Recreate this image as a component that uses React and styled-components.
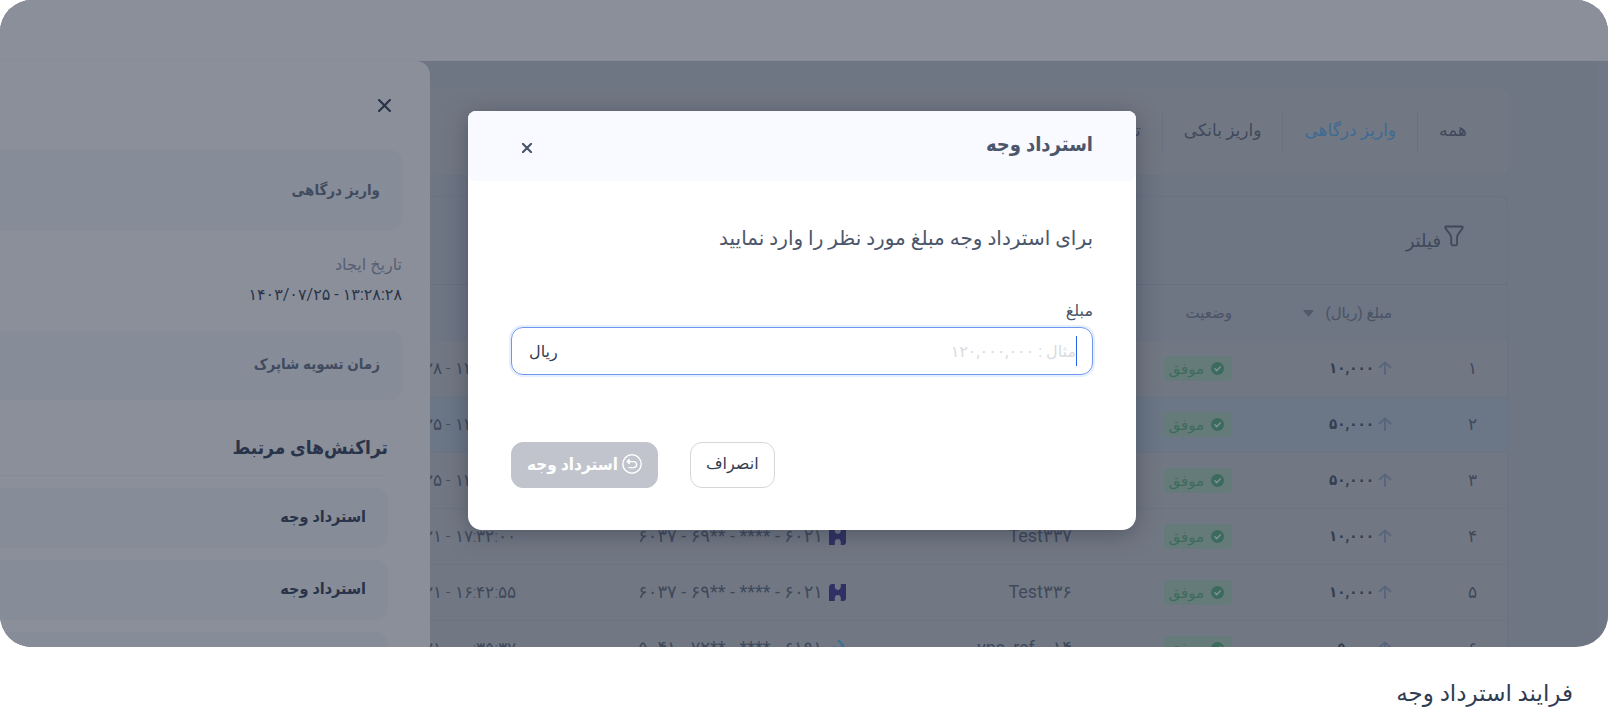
import React from "react";
import styled, { createGlobalStyle, css } from "styled-components";

const GlobalStyle = createGlobalStyle`
  *, *::before, *::after { box-sizing: border-box; }
  body { margin: 0; background: #fff; }
  body, button, input, table {
    font-family: Roboto, "DejaVu Sans", "Liberation Sans", sans-serif;
  }
  h1, h2, h3, p { margin: 0; }
`;

const strong = css`
  font-family: Roboto, "DejaVu Sans Condensed", "DejaVu Sans", sans-serif;
  font-weight: 700;
`;

const Figure = styled.figure`
  margin: 0;
  overflow: hidden;
`;

const Screen = styled.div`
  position: relative;
  height: 647px;
  overflow: hidden;
  border-radius: 32px;
  background: #6e7583;
  color: #3c475b;
`;

const TopBar = styled.header`
  height: 61px;
  background: #8b8f99;
  border-bottom: 1px solid #868c98;
`;

const Body = styled.div`
  display: flex;
`;

const ScrollTrack = styled.div`
  flex: 0 0 9px;
  height: 586px;
  background: #717885;
`;

const Main = styled.main`
  flex: 1;
  min-width: 0;
  display: flex;
  flex-direction: column;
  gap: 21px;
  padding: 27px 91px 0 100px;
`;

const Tabs = styled.nav`
  display: flex;
  align-items: center;
  height: 87px;
  padding: 0 20px;
  border-radius: 8px;
  background: #727883;
`;

const Tab = styled.a`
  padding: 0 21px 4px;
  line-height: 38px;
  font-size: 17px;
  white-space: nowrap;
  text-decoration: none;
  color: ${(p) => (p.$active ? "#3d6a93" : "#3f495b")};
  & + & { border-right: 1px solid #697080; }
`;

const Card = styled.section`
  border: 1px solid #6a7281;
  border-bottom: 0;
  border-radius: 8px 8px 0 0;
`;

const Toolbar = styled.div`
  display: flex;
  align-items: center;
  height: 88px;
  padding: 0 43px;
  border-bottom: 1px solid #687080;
`;

const FilterButton = styled.button`
  display: flex;
  align-items: flex-start;
  gap: 3px;
  padding: 0;
  border: 0;
  background: none;
  color: #3f495b;
  font-size: 18px;
  line-height: 32px;
`;

const Table = styled.table`
  width: 100%;
  table-layout: fixed;
  border-collapse: separate;
  border-spacing: 0;
  font-size: 17px;
  line-height: 24px;
`;

const Col = styled.col`
  width: ${(p) => p.$w};
`;

const Th = styled.th`
  height: 56px;
  padding: 0 15px;
  text-align: right;
  font-weight: 400;
  font-size: 15px;
  white-space: nowrap;
  color: #495366;
`;

const Row = styled.tr`
  background: ${(p) => (p.$selected ? "#6b7686" : "#727883")};
`;

const Td = styled.td`
  height: 56px;
  padding: 0 ${(p) => (p.$index ? "30px" : "15px")} 1px 0;
  border-bottom: 1px solid #6d7481;
  text-align: right;
  white-space: nowrap;
  font-size: ${(p) => (p.$large ? "18px" : "17px")};
  font-weight: ${(p) => (p.$light ? 300 : 400)};
  color: #3f495b;
`;

const Inline = styled.span`
  display: flex;
  align-items: center;
  gap: ${(p) => p.$gap};
`;

const Amount = styled.span`
  ${strong}
  font-size: 15px;
  color: #333e53;
`;

const Ltr = styled.bdi`
  unicode-bidi: isolate;
  direction: ltr;
`;

const Badge = styled.span`
  display: inline-flex;
  align-items: center;
  gap: 7px;
  height: 25px;
  padding: 0 8px 0 5px;
  border-radius: 4px;
  background: #657b7a;
  color: #3e6b5a;
  font-size: 15px;
  line-height: 24px;
  vertical-align: middle;
`;

const Drawer = styled.aside`
  position: absolute;
  top: 61px;
  bottom: 0;
  left: 0;
  width: 430px;
  overflow: hidden;
  padding: 34px 28px 0 0;
  border-radius: 0 14px 0 0;
  background: #8b8f99;
  color: #29344a;
`;

const CloseButton = styled.button`
  display: grid;
  place-items: center;
  padding: 0;
  border: 0;
  background: none;
  color: inherit;
  width: 20px;
  height: 20px;
`;

const DrawerTop = styled.div`
  padding-right: 8px;
  height: 55px;
`;

const Panel = styled.div`
  display: flex;
  align-items: center;
  height: ${(p) => p.$h};
  padding: 0 22px 2px;
  border-radius: 0 12px 12px 0;
  background: #868d98;
  color: ${(p) => (p.$dark ? "#29344a" : "#414b60")};
  ${strong}
  font-size: ${(p) => (p.$dark ? "16px" : "15px")};
  line-height: 24px;
`;

const Field = styled.dl`
  margin: 0;
  padding: 19px 0 20px;
  line-height: 30px;
  font-size: 16px;
`;

const FieldName = styled.dt`
  color: #566074;
`;

const FieldValue = styled.dd`
  margin: 0;
`;

const Related = styled.section`
  display: flex;
  flex-direction: column;
  gap: 12px;
  padding: 29px 14px 0 0;
`;

const RelatedTitle = styled.h3`
  ${strong}
  height: 47px;
  border-bottom: 1px solid #858b97;
  font-size: 19px;
  line-height: 38px;
`;

const ModalLayer = styled.div`
  position: absolute;
  inset: 111px 4px auto 0;
  display: flex;
  justify-content: center;
`;

const Modal = styled.section`
  width: 668px;
  overflow: hidden;
  border-radius: 8px 8px 14px 14px;
  background: #fff;
  color: #4b566b;
  box-shadow: 0 4px 24px rgba(30, 38, 56, 0.4);
`;

const ModalHeader = styled.header`
  display: flex;
  justify-content: space-between;
  align-items: flex-end;
  height: 70px;
  padding: 0 43px 23px 49px;
  border-radius: 0 0 8px 8px;
  background: #f9faff;
`;

const ModalTitle = styled.h2`
  ${strong}
  font-size: 20px;
  line-height: 28px;
`;

const ModalBody = styled.form`
  padding: 41px 43px 42px;
`;

const Lead = styled.p`
  font-size: 20px;
  line-height: 32px;
`;

const Label = styled.label`
  display: block;
  margin-top: 45px;
  font-size: 16px;
  line-height: 24px;
`;

const InputBox = styled.div`
  display: flex;
  align-items: center;
  height: 48px;
  margin-top: 4px;
  padding: 0 15px 0 17px;
  border: 1px solid #6f96f0;
  border-radius: 12px;
  box-shadow: 0 0 0 2px #e6effe;
  color: #323d52;
  font-size: 16px;
`;

const Caret = styled.i`
  width: 1px;
  height: 30px;
  background: #2a5fe8;
`;

const AmountInput = styled.input`
  flex: 1;
  min-width: 0;
  height: 32px;
  padding: 0;
  border: 0;
  outline: 0;
  background: none;
  color: inherit;
  font-size: 16px;
  &::placeholder { color: #d9dbe1; opacity: 1; }
`;

const Actions = styled.footer`
  display: flex;
  justify-content: flex-end;
  gap: 32px;
  margin-top: 67px;
`;

const Button = styled.button`
  display: flex;
  align-items: center;
  justify-content: center;
  gap: 4px;
  height: 46px;
  padding: 0 15px 2px;
  border: 1px solid #d6d7db;
  border-radius: 12px;
  background: #fff;
  color: #323d52;
  font-size: 16px;
  line-height: 24px;
  white-space: nowrap;
  ${(p) =>
    p.$primary &&
    css`
      ${strong}
      font-size: 17px;
      border-color: #c1c4cc;
      background: #c1c4cc;
      color: #fff;
    `}
`;

const Caption = styled.figcaption`
  padding: 28px 35px 0;
  font-size: 23px;
  line-height: 37px;
  color: #303c52;
`;

const FunnelIcon = () => (
  <svg width="20" height="22" viewBox="0 0 20 22" fill="none" stroke="currentColor" strokeWidth="1.8" strokeLinejoin="round">
    <path d="M2 1.5H18C18.8 1.5 19 2.4 18.6 3C17 6 13 9.4 13 12.5V18.5C13 19.7 12.5 20.3 11.5 20.3H8.8C7.8 20.3 7.2 19.7 7.2 18.5V12.5C7.2 9.4 3 6 1.4 3C1 2.4 1.2 1.5 2 1.5Z" />
  </svg>
);

const ArrowUp = () => (
  <svg width="14" height="14" viewBox="0 0 14 14" fill="none" stroke="#56657c" strokeWidth="1.8" strokeLinecap="round" strokeLinejoin="round">
    <path d="M7 13V1.5M1.5 6.5L7 1.3L12.5 6.5" />
  </svg>
);

const CheckDot = () => (
  <svg width="13" height="13" viewBox="0 0 13 13">
    <circle cx="6.5" cy="6.5" r="6.5" fill="#3c6a5c" />
    <path d="M3.8 6.7L5.8 8.6L9.3 4.9" fill="none" stroke="#7a9191" strokeWidth="1.5" strokeLinecap="round" />
  </svg>
);

const SortIcon = () => (
  <svg width="11" height="7" viewBox="0 0 11 7" fill="#505a6c">
    <path d="M1 0H10Q11 .3 10.3 1.2L6.2 6Q5.5 6.8 4.8 6L.7 1.2Q0 .3 1 0Z" />
  </svg>
);

const SaderatIcon = () => (
  <svg width="17" height="17" viewBox="0 0 17 17">
    <path d="M3.5 0H17V14Q17 17 14 17H0V3.5Q0 0 3.5 0Z" fill="#2f3164" />
    <path d="M5.8 0H11.8V3.6Q11.4 6 8.8 6Q6.2 6 5.8 3.6ZM5.8 17H11.8V13.4Q11.4 11 8.8 11Q6.2 11 5.8 13.4Z" fill="#727883" />
    <path d="M5.8 5L7.6 7.2L5.8 9.400ZM11.800 5L10 7.200L11.800 9.400Z" fill="#2f3164" />
  </svg>
);

const ResalatIcon = () => (
  <svg width="17" height="17" viewBox="0 0 17 17" fill="none" stroke="#3f7290" strokeWidth="2.4">
    <path d="M9 0L14 5.5L6 14M1 10L6 6.5M3 13L8 9" />
  </svg>
);

const Cross = ({ size, width }) => (
  <svg width={size} height={size} viewBox="0 0 12 12" fill="none" stroke="currentColor" strokeWidth={width} strokeLinecap="round">
    <path d="M1 1L11 11M11 1L1 11" />
  </svg>
);

const ReturnIcon = () => (
  <svg width="20" height="20" viewBox="0 0 20 20" fill="none" stroke="#fff" strokeWidth="1.4" strokeLinecap="round" strokeLinejoin="round">
    <circle cx="10" cy="10" r="9.2" />
    <path d="M7 13.6H11.6A3 3 0 0 0 11.6 7.6H5.8" />
    <path d="M7.2 5.6L5.2 7.6L7.2 9.6Z" fill="#fff" />
  </svg>
);

const tabs = ["همه", "واریز درگاهی", "واریز بانکی", "تسویه"];

const rows = [
  { n: "۱", amount: "۱۰,۰۰۰", user: "Test۳۴۰", card: "۶۰۳۷ - ۶۹** - **** - ۶۰۲۱", date: "۱۴۰۳/۰۷/۲۸ - ۱۲:۲۰:۱۸" },
  { n: "۲", amount: "۵۰,۰۰۰", user: "Test۳۳۹", card: "۶۰۳۷ - ۶۹** - **** - ۶۰۲۱", date: "۱۴۰۳/۰۷/۲۵ - ۱۳:۲۸:۲۸", selected: true },
  { n: "۳", amount: "۵۰,۰۰۰", user: "Test۳۳۸", card: "۶۰۳۷ - ۶۹** - **** - ۶۰۲۱", date: "۱۴۰۳/۰۷/۲۵ - ۱۳:۲۴:۰۵" },
  { n: "۴", amount: "۱۰,۰۰۰", user: "Test۳۳۷", card: "۶۰۳۷ - ۶۹** - **** - ۶۰۲۱", date: "۱۴۰۳/۰۷/۲۱ - ۱۷:۳۲:۰۰" },
  { n: "۵", amount: "۱۰,۰۰۰", user: "Test۳۳۶", card: "۶۰۳۷ - ۶۹** - **** - ۶۰۲۱", date: "۱۴۰۳/۰۷/۲۱ - ۱۶:۴۲:۵۵" },
  { n: "۶", amount: "۵,۰۰۰", user: "yns_ref_۰۱۴", card: "۵۰۴۱ - ۷۲** - **** - ۶۱۹۱", date: "۱۴۰۳/۰۷/۲۱ - ۰۰:۳۵:۳۷", resalat: true },
];

export default function App() {
  return (
    <Figure dir="rtl" lang="fa">
      <GlobalStyle />
      <Screen>
        <TopBar />
        <Body>
          <ScrollTrack />
          <Main>
            <Tabs>
              {tabs.map((t, i) => (
                <Tab key={t} href="#" $active={i === 1}>{t}</Tab>
              ))}
            </Tabs>
            <Card>
              <Toolbar>
                <FilterButton type="button"><FunnelIcon />فیلتر</FilterButton>
              </Toolbar>
              <Table>
                <colgroup>
                  <Col $w="100px" />
                  <Col $w="160px" />
                  <Col $w="160px" />
                  <Col $w="226px" />
                  <Col $w="330px" />
                  <Col $w="auto" />
                </colgroup>
                <thead>
                  <tr>
                    <Th />
                    <Th><Inline $gap="12px">مبلغ (ریال)<SortIcon /></Inline></Th>
                    <Th>وضعیت</Th>
                    <Th />
                    <Th />
                    <Th />
                  </tr>
                </thead>
                <tbody>
                  {rows.map((r) => (
                    <Row key={r.n} $selected={r.selected}>
                      <Td $index $light>{r.n}</Td>
                      <Td><Inline $gap="4px"><ArrowUp /><Amount>{r.amount}</Amount></Inline></Td>
                      <Td><Badge><CheckDot />موفق</Badge></Td>
                      <Td $large><Ltr>{r.user}</Ltr></Td>
                      <Td $large>
                        <Inline $gap="6px">
                          {r.resalat ? <ResalatIcon /> : <SaderatIcon />}
                          <Ltr>{r.card}</Ltr>
                        </Inline>
                      </Td>
                      <Td $light><Ltr>{r.date}</Ltr></Td>
                    </Row>
                  ))}
                </tbody>
              </Table>
            </Card>
          </Main>
        </Body>

        <Drawer>
          <DrawerTop>
            <CloseButton type="button" aria-label="بستن"><Cross size={13} width={2} /></CloseButton>
          </DrawerTop>
          <Panel $h="81px">واریز درگاهی</Panel>
          <Field>
            <FieldName>تاریخ ایجاد</FieldName>
            <FieldValue><Ltr>۱۴۰۳/۰۷/۲۵ - ۱۳:۲۸:۲۸</Ltr></FieldValue>
          </Field>
          <Panel $h="70px">زمان تسویه شاپرک</Panel>
          <Related>
            <RelatedTitle>تراکنش‌های مرتبط</RelatedTitle>
            <Panel $h="60px" $dark>استرداد وجه</Panel>
            <Panel $h="60px" $dark>استرداد وجه</Panel>
            <Panel $h="60px" $dark />
          </Related>
        </Drawer>

        <ModalLayer>
          <Modal role="dialog" aria-labelledby="refund-title">
            <ModalHeader>
              <ModalTitle id="refund-title">استرداد وجه</ModalTitle>
              <CloseButton type="button" aria-label="بستن"><Cross size={10} width={2.6} /></CloseButton>
            </ModalHeader>
            <ModalBody onSubmit={(e) => e.preventDefault()}>
              <Lead>برای استرداد وجه مبلغ مورد نظر را وارد نمایید</Lead>
              <Label htmlFor="amount">مبلغ</Label>
              <InputBox>
                <Caret />
                <AmountInput id="amount" placeholder="مثال : ۱۲۰,۰۰۰,۰۰۰" />
                <span>ریال</span>
              </InputBox>
              <Actions>
                <Button type="button">انصراف</Button>
                <Button type="submit" $primary disabled><ReturnIcon />استرداد وجه</Button>
              </Actions>
            </ModalBody>
          </Modal>
        </ModalLayer>
      </Screen>
      <Caption>فرایند استرداد وجه</Caption>
    </Figure>
  );
}
